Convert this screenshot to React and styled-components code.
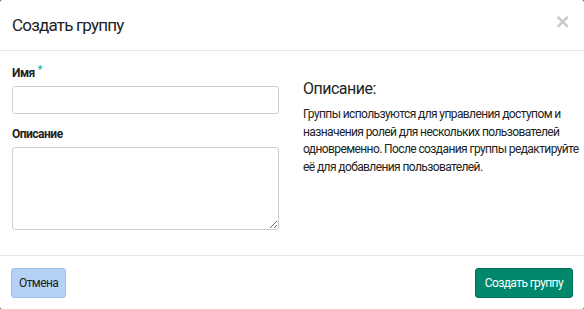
import React from 'react'
import styled, { createGlobalStyle } from 'styled-components'

const GlobalStyle = createGlobalStyle`
  html, body {
    margin: 0;
    padding: 0;
    background: #2b3b3b;
  }
  body {
    font-family: Roboto, "Liberation Sans", sans-serif;
    color: #222;
  }
  * { box-sizing: border-box; }
`

const Modal = styled.div`
  width: 584px;
  height: 309px;
  background: #fff;
  border-radius: 2px;
  display: flex;
  flex-direction: column;
`

const Header = styled.div`
  height: 51px;
  border-bottom: 1px solid #e5e5e5;
  display: flex;
  align-items: center;
  justify-content: space-between;
  padding: 0 13px 0 12px;
`

const Title = styled.h4`
  margin: 0;
  font-size: 17px;
  font-weight: 400;
  letter-spacing: -0.8px;
  color: #222;
`

const Close = styled.button`
  border: 0;
  background: none;
  padding: 0;
  margin-top: -9px;
  color: #c8c8c8;
  font-size: 20px;
  font-weight: 700;
  line-height: 1;
  cursor: pointer;
  font-family: "DejaVu Sans", sans-serif;
`

const Body = styled.div`
  flex: 1;
  display: grid;
  grid-template-columns: 267px 1fr;
  gap: 24px;
  padding: 12px 12px 0 12px;
`

const Field = styled.div`
  display: flex;
  flex-direction: column;
  margin-bottom: 10px;
`

const Label = styled.label`
  font-size: 12px;
  font-weight: 700;
  letter-spacing: -0.5px;
  color: #222;
  margin: 2px 0 5px 0;
  line-height: 16px;
`

const Required = styled.span`
  color: #1ab394;
  margin-left: 3px;
  font-size: 10px;
  vertical-align: top;
  position: relative;
  top: -3px;
`

const Input = styled.input`
  height: 28px;
  border: 1px solid #cfcfcf;
  border-radius: 3px;
  font: inherit;
  padding: 4px 8px;
`

const TextArea = styled.textarea`
  height: 83px;
  border: 1px solid #cfcfcf;
  border-radius: 3px;
  font: inherit;
  padding: 4px 8px;
  resize: vertical;
`

const Aside = styled.div`
  padding-top: 16px;
`

const AsideTitle = styled.h3`
  margin: 0 0 8px 0;
  font-size: 16px;
  font-weight: 400;
  letter-spacing: -0.5px;
  color: #222;
`

const AsideText = styled.p`
  margin: 0;
  font-size: 12px;
  line-height: 17.5px;
  letter-spacing: -0.6px;
  white-space: nowrap;
  color: #222;
`

const Footer = styled.div`
  height: 54px;
  border-top: 1px solid #e5e5e5;
  display: flex;
  align-items: center;
  justify-content: space-between;
  padding: 0 11px 0 11px;
`

const Button = styled.button`
  height: 30px;
  padding: 0 ${p => (p.$primary ? '9px' : '7px')};
  border-radius: 3px;
  font-family: inherit;
  font-size: 12px;
  letter-spacing: -0.6px;
  cursor: pointer;
  border: 1px solid ${p => (p.$primary ? '#006f58' : '#9ec0ea')};
  background: ${p => (p.$primary ? '#00876c' : '#b4d1f6')};
  color: ${p => (p.$primary ? '#fff' : '#222')};
`

export default function App() {
  return (
    <>
      <GlobalStyle />
      <Modal>
        <Header>
          <Title>Создать группу</Title>
          <Close>×</Close>
        </Header>
        <Body>
          <div>
            <Field>
              <Label htmlFor="name">Имя<Required>*</Required></Label>
              <Input id="name" />
            </Field>
            <Field>
              <Label htmlFor="desc">Описание</Label>
              <TextArea id="desc" />
            </Field>
          </div>
          <Aside>
            <AsideTitle>Описание:</AsideTitle>
            <AsideText>
              Группы используются для управления доступом и<br />
              назначения ролей для нескольких пользователей<br />
              одновременно. После создания группы редактируйте<br />
              её для добавления пользователей.
            </AsideText>
          </Aside>
        </Body>
        <Footer>
          <Button>Отмена</Button>
          <Button $primary>Создать группу</Button>
        </Footer>
      </Modal>
    </>
  )
}
